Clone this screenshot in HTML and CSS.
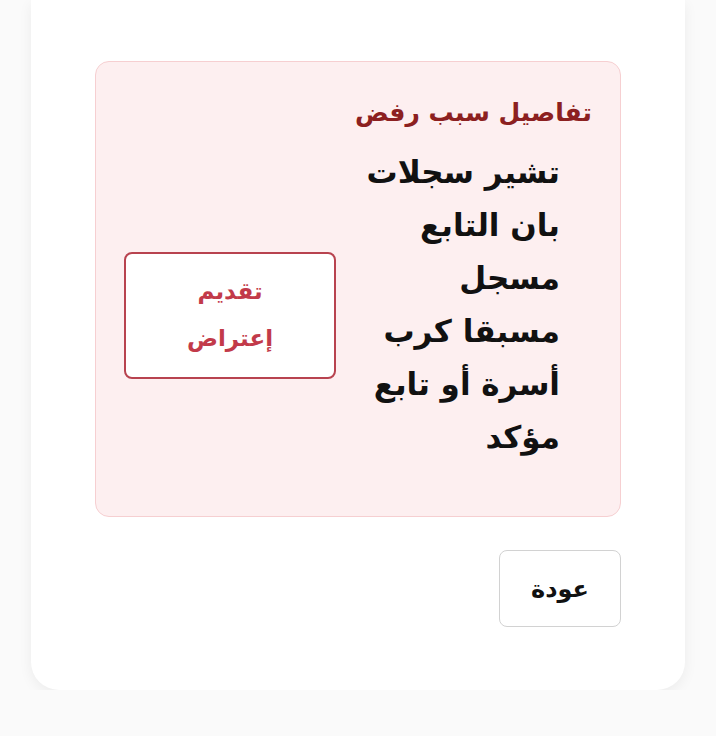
FILE: index.html
```html
<!DOCTYPE html>
<html lang="ar" dir="rtl">
	<head>
		<meta charset="UTF-8" />
		<meta name="viewport" content="width=device-width, initial-scale=1.0" />
		<title>تفاصيل سبب رفض</title>
		<link rel="stylesheet" href="styles.css">
	</head>
	<body>
		<section class="card">
			<div class="reject-box">
				<h2 class="reject-title">تفاصيل سبب رفض</h2>
				<div class="reject-row">
					<p class="reject-text">تشير سجلات بان التابع مسجل مسبقا كرب أسرة أو تابع مؤكد</p>
					<button class="objection-btn">تقديم إعتراض</button>
				</div>
			</div>
			<div class="actions">
				<button class="back-btn">عودة</button>
			</div>
		</section>
	</body>
</html>
```

FILE: styles.css
```css
body {
	margin: 0;
	background-color: #fafafa;
	font-family: "DejaVu Sans", sans-serif;
	color: #111;
}

.card {
	margin: 0 31px;
	padding: 61px 64px 63px;
	background-color: #fff;
	border-radius: 0 0 28px 28px;
	box-shadow: 0 4px 14px rgba(0, 0, 0, 0.06);
}

.reject-box {
	padding: 32px 28px 52px;
	background-color: #fdeff0;
	border: 1.5px solid #f6cfd1;
	border-radius: 14px;
}

.reject-title {
	margin: 0 0 14px;
	font-size: 25px;
	line-height: 38px;
	font-weight: 700;
	color: #8c2020;
}

.reject-row {
	display: flex;
	align-items: center;
	justify-content: space-between;
	padding-right: 32px;
}

.reject-text {
	width: 196px;
	margin: 0;
	font-size: 31px;
	line-height: 53px;
	font-weight: 700;
}

.objection-btn {
	width: 212px;
	height: 127px;
	margin-top: 20px;
	padding: 0 40px;
	background-color: #fff;
	border: 2px solid #b8434f;
	border-radius: 8px;
	font-family: inherit;
	font-size: 23px;
	line-height: 47px;
	font-weight: 700;
	color: #c23a4a;
}

.actions {
	display: flex;
	margin-top: 33px;
}

.back-btn {
	width: 122px;
	height: 77px;
	background-color: #fff;
	border: 1.5px solid #d2d2d2;
	border-radius: 8px;
	font-family: inherit;
	font-size: 24px;
	font-weight: 700;
	color: #111;
}
```
